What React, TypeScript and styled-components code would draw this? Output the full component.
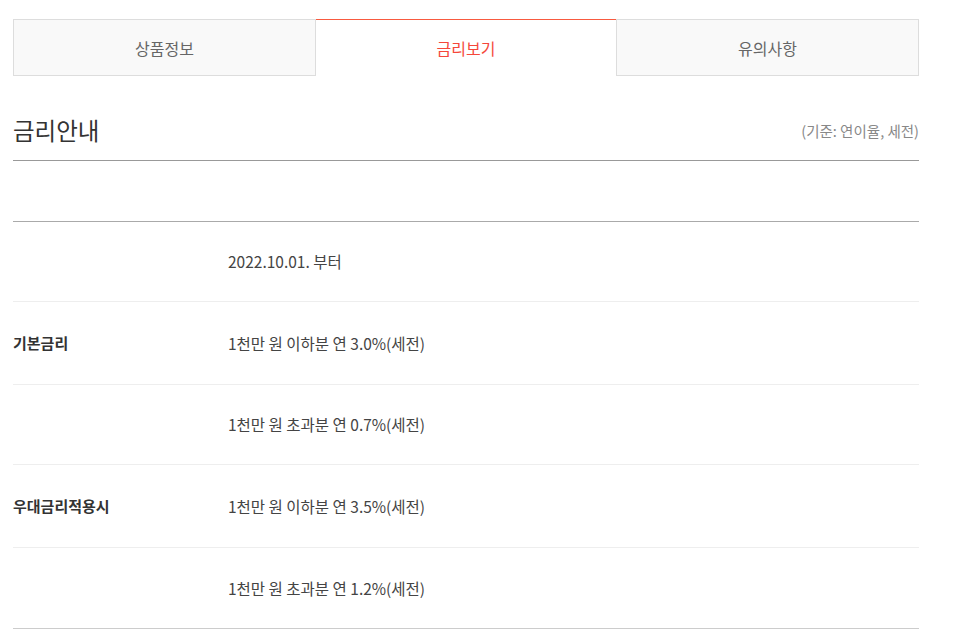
import React from 'react';
import styled, { createGlobalStyle } from 'styled-components';

const GlobalStyle = createGlobalStyle`
  body {
    margin: 0;
    background: #fff;
    font-family: 'Noto Sans CJK KR', 'Noto Sans', sans-serif;
    color: #333;
  }
`;

const Page = styled.div`
  width: 906px;
  padding: 19px 37px 0 13px;
`;

const Tabs = styled.ul`
  display: grid;
  grid-template-columns: 303px 300px 303px;
  margin: 0;
  padding: 0;
  list-style: none;
`;

const Tab = styled.li<{ active?: boolean }>`
  display: flex;
  align-items: center;
  justify-content: center;
  height: 57px;
  box-sizing: border-box;
  font-size: 16px;
  color: ${({ active }) => (active ? '#f5473a' : '#666')};
  background: ${({ active }) => (active ? '#fff' : '#f9f9f9')};
  border: 1px solid #ddd;
  border-top: 1px solid ${({ active }) => (active ? '#f85a40' : '#ddd')};
  border-bottom-color: ${({ active }) => (active ? '#fff' : '#ddd')};
  border-left-width: ${({ active }) => (active ? '0' : '1px')};
  border-right-width: ${({ active }) => (active ? '0' : '1px')};
`;

const Heading = styled.div`
  display: flex;
  align-items: center;
  justify-content: space-between;
  margin-top: 38px;
  padding-bottom: 14px;
  border-bottom: 1px solid #999;
`;

const Title = styled.h3`
  margin: 0;
  font-size: 23.5px;
  font-weight: 400;
  line-height: 32px;
  color: #333;
`;

const Note = styled.span`
  font-size: 14.5px;
  color: #888;
`;

const RateTable = styled.table`
  width: 100%;
  border-collapse: collapse;
  border-bottom: 1px solid #ccc;
`;

const HeadRow = styled.tr`
  height: 60px;
  border-bottom: 1px solid #aaa;
`;

const Row = styled.tr<{ h: number }>`
  height: ${({ h }) => h}px;
  & + & {
    border-top: 1px solid #eee;
  }
`;

const Label = styled.th`
  width: 215px;
  padding: 0;
  text-align: left;
  font-size: 15px;
  font-weight: 600;
  color: #333;
`;

const Value = styled.td`
  padding: 0;
  font-size: 15.5px;
  color: #444;
`;

const rows = [
  { label: '', value: '2022.10.01. 부터', h: 80 },
  { label: '기본금리', value: '1천만 원 이하분 연 3.0%(세전)', h: 83 },
  { label: '', value: '1천만 원 초과분 연 0.7%(세전)', h: 80 },
  { label: '우대금리적용시', value: '1천만 원 이하분 연 3.5%(세전)', h: 83 },
  { label: '', value: '1천만 원 초과분 연 1.2%(세전)', h: 81 },
];

const App: React.FC = () => {
  return (
    <>
      <GlobalStyle />
      <Page>
        <Tabs>
          <Tab>상품정보</Tab>
          <Tab active>금리보기</Tab>
          <Tab>유의사항</Tab>
        </Tabs>
        <Heading>
          <Title>금리안내</Title>
          <Note>(기준: 연이율, 세전)</Note>
        </Heading>
        <RateTable>
          <thead>
            <HeadRow>
              <Label />
              <Value />
            </HeadRow>
          </thead>
          <tbody>
            {rows.map((r, i) => (
              <Row key={i} h={r.h}>
                <Label>{r.label}</Label>
                <Value>{r.value}</Value>
              </Row>
            ))}
          </tbody>
        </RateTable>
      </Page>
    </>
  );
};

export default App;
